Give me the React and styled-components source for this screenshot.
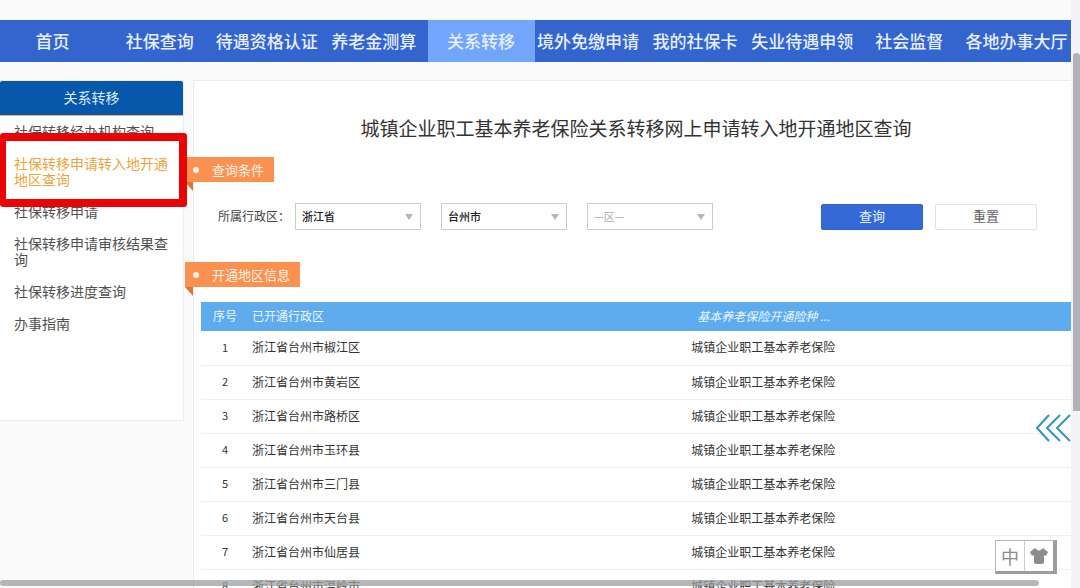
import React from 'react';
import styled, { createGlobalStyle } from 'styled-components';

const navItems = [
  '首页', '社保查询', '待遇资格认证', '养老金测算', '关系转移',
  '境外免缴申请', '我的社保卡', '失业待遇申领', '社会监督', '各地办事大厅',
];

const menuItems = [
  '社保转移经办机构查询',
  '社保转移申请转入地开通地区查询',
  '社保转移申请',
  '社保转移申请审核结果查询',
  '社保转移进度查询',
  '办事指南',
];

const areas = ['椒江区', '黄岩区', '路桥区', '玉环县', '三门县', '天台县', '仙居县', '温岭市'];

const App = () => {
  return (
    <Window>
      <GlobalStyle />
      <Page>
        <Nav>
          {navItems.map((item) => (
            <NavLink href="#" key={item} $active={item === '关系转移'}>{item}</NavLink>
          ))}
        </Nav>
        <Body>
          <Sidebar>
            <SideHead>关系转移</SideHead>
            <Menu>
              {menuItems.map((item, i) => (
                <MenuItem key={item}>
                  <MenuLink href="#" $active={i === 1}>{item}</MenuLink>
                  {i === 1 && <Highlight />}
                </MenuItem>
              ))}
            </Menu>
          </Sidebar>
          <Main>
            <Title>城镇企业职工基本养老保险关系转移网上申请转入地开通地区查询</Title>
            <Ribbon>查询条件</Ribbon>
            <Form onSubmit={(e) => e.preventDefault()}>
              <Label htmlFor="province">所属行政区：</Label>
              <Selects>
                <SelectBox>
                  <Select id="province"><option>浙江省</option></Select>
                </SelectBox>
                <SelectBox>
                  <Select aria-label="市"><option>台州市</option></Select>
                </SelectBox>
                <SelectBox>
                  <Select aria-label="区" $empty><option>—区—</option></Select>
                </SelectBox>
              </Selects>
              <Buttons>
                <Button type="submit" $primary>查询</Button>
                <Button type="reset">重置</Button>
              </Buttons>
            </Form>
            <Ribbon>开通地区信息</Ribbon>
            <Table>
              <thead>
                <tr>
                  <Th $width="48px" $center>序号</Th>
                  <Th>已开通行政区</Th>
                  <Th $width="44%"><Hint>基本养老保险开通险种 ...</Hint></Th>
                </tr>
              </thead>
              <tbody>
                {areas.map((area, i) => (
                  <tr key={area}>
                    <Td $center>{i + 1}</Td>
                    <Td>浙江省台州市{area}</Td>
                    <Td>城镇企业职工基本养老保险</Td>
                  </tr>
                ))}
              </tbody>
            </Table>
          </Main>
        </Body>
      </Page>
      <ScrollTrack><ScrollThumb /></ScrollTrack>
      <BottomBar />
      <Expand aria-label="展开">
        <svg width="36" height="28" viewBox="0 0 36 28" fill="none" stroke="#3295b8" strokeWidth="2">
          <path d="M14 1 2 14l12 13M25 1 12 14l13 13M35 1 22 14l13 13" />
        </svg>
      </Expand>
      <Ime>
        <ImeButton>中</ImeButton>
        <ImeButton aria-label="皮肤">
          <svg width="18" height="16" viewBox="0 0 18 16" fill="#8c8c8c">
            <path d="M5 0 Q9 5 13 0 L18 4 L16 8 L14 7 V14 Q14 16 12 16 H6 Q4 16 4 14 V7 L2 8 L0 4 Z" />
          </svg>
        </ImeButton>
      </Ime>
    </Window>
  )
}

export default App

const GlobalStyle = createGlobalStyle`
    * {
        box-sizing: border-box;
    }
    body {
        margin: 0;
        background: #fafafa;
        color: #444;
        font-family: "Noto Sans CJK SC", "Liberation Sans", sans-serif;
        font-size: 12px;
    }
    a {
        text-decoration: none;
    }
    button, select {
        font-family: inherit;
    }
`;

const Window = styled.div`
    display: flex;
    height: 100vh;
    overflow: hidden;
`;

const Page = styled.div`
    flex: 1;
    min-width: 0;
    padding-top: 20px;
`;

const Nav = styled.nav`
    display: flex;
    height: 42px;
    background: #3465cf;
`;

const NavLink = styled.a`
    flex: 1 1 0;
    display: flex;
    align-items: center;
    justify-content: center;
    padding: 0 2px 2px 0;
    font-size: 17px;
    font-weight: 500;
    white-space: nowrap;
    color: #e6efff;
    background: ${(p) => (p.$active ? '#72a6fc' : 'transparent')};
`;

const Body = styled.div`
    display: flex;
    align-items: flex-start;
    gap: 9px;
    margin-top: 18px;
`;

const Sidebar = styled.aside`
    width: 184px;
    flex-shrink: 0;
    min-height: 341px;
    background: #fff;
    border: 1px solid #ececec;
    border-left: 0;
`;

const SideHead = styled.div`
    height: 35px;
    line-height: 32px;
    text-align: center;
    font-size: 14px;
    color: #dcebfa;
    background: #0757ab;
    border-bottom: 1px solid #f0b070;
    border-radius: 2px 2px 0 0;
`;

const Menu = styled.ul`
    list-style: none;
    margin: 0;
    padding: 7px 14px;
    display: flex;
    flex-direction: column;
    gap: 16px;
`;

const MenuItem = styled.li`
    position: relative;
    line-height: 16px;
    font-size: 14px;
`;

const MenuLink = styled.a`
    display: block;
    color: ${(p) => (p.$active ? '#eba43c' : '#505050')};
`;

/* red frame over the current entry, wider than the sidebar */
const Highlight = styled.div`
    position: absolute;
    inset: -22px -18px -20px -14px;
    border: 8px solid #e90505;
    border-left-width: 6px;
    border-radius: 3px;
    pointer-events: none;
    z-index: 2;
`;

const Main = styled.main`
    flex: 1;
    min-width: 0;
    padding: 35px 0 0 7px;
    background: #fff;
    border: 1px solid #ebebeb;
    border-right: 0;
`;

const Title = styled.h1`
    margin: 0 0 17px;
    text-align: center;
    font-size: 19px;
    font-weight: 400;
    line-height: 24px;
    color: #333;
`;

const Ribbon = styled.h2`
    position: relative;
    width: fit-content;
    height: 25px;
    margin: 0 0 0 -16px;
    padding: 0 10px 0 27px;
    font-size: 13px;
    font-weight: 400;
    line-height: 25px;
    color: #fff0e2;
    background: #fb9150;

    &::before {
        content: '';
        position: absolute;
        left: 8px;
        top: 10px;
        width: 6px;
        height: 6px;
        border-radius: 50%;
        background: #fff3e8;
    }

    &::after {
        content: '';
        position: absolute;
        left: 0;
        top: 100%;
        border-top: 9px solid #d9763c;
        border-left: 8px solid transparent;
    }
`;

const Form = styled.form`
    display: flex;
    align-items: center;
    height: 27px;
    margin: 21px 0 32px;
    padding: 0 34px 0 17px;
`;

const Label = styled.label`
    width: 77px;
    padding-bottom: 2px;
    white-space: nowrap;
`;

const Selects = styled.div`
    display: flex;
    gap: 20px;
`;

const SelectBox = styled.div`
    position: relative;
    width: 126px;

    &::after {
        content: '';
        position: absolute;
        right: 8px;
        top: 11px;
        border-top: 6px solid #b5b5b5;
        border-left: 4px solid transparent;
        border-right: 4px solid transparent;
        pointer-events: none;
    }
`;

const Select = styled.select`
    appearance: none;
    display: block;
    width: 100%;
    height: 27px;
    padding: 0 6px 2px;
    border: 1px solid #ccc;
    border-radius: 0;
    background: #fff;
    font-size: 11px;
    font-weight: ${(p) => (p.$empty ? 400 : 500)};
    color: ${(p) => (p.$empty ? '#aaa' : '#222')};
`;

const Buttons = styled.div`
    display: flex;
    gap: 12px;
    margin-left: auto;
`;

const Button = styled.button`
    width: 102px;
    height: 26px;
    padding: 0 0 2px;
    font-size: 13px;
    border-radius: 2px;
    border: 1px solid ${(p) => (p.$primary ? '#2f62cc' : '#e2e2e2')};
    color: ${(p) => (p.$primary ? '#e8f0ff' : '#666')};
    background: ${(p) => (p.$primary ? '#356ad6' : '#fff')};
`;

const Table = styled.table`
    width: 100%;
    margin-top: 15px;
    table-layout: fixed;
    border-collapse: collapse;
`;

const Th = styled.th`
    width: ${(p) => p.$width || 'auto'};
    height: 29px;
    padding: 0 3px 2px;
    text-align: ${(p) => (p.$center ? 'center' : 'left')};
    font-weight: 400;
    color: #eaf6ff;
    background: #5eabed;
`;

const Hint = styled.em`
    padding-left: 6px;
`;

const Td = styled.td`
    height: 34px;
    padding: 0 3px 2px;
    text-align: ${(p) => (p.$center ? 'center' : 'left')};
    font-size: ${(p) => (p.$center ? '11px' : '12px')};
    color: #333;
    border-bottom: 1px solid #f0f0f0;
`;

const ScrollTrack = styled.div`
    width: 9px;
    flex-shrink: 0;
    padding: 53px 0 0 2px;
    background: #f4f4f6;
`;

const ScrollThumb = styled.div`
    height: 67%;
    border-radius: 4px 4px 0 0;
    background: #b1b1b7;
`;

const BottomBar = styled.div`
    position: fixed;
    left: 0;
    right: 41px;
    bottom: 2px;
    height: 6px;
    border-radius: 3px;
    background: rgba(155, 157, 162, 0.75);
`;

const Expand = styled.button`
    position: fixed;
    right: 9px;
    top: 414px;
    padding: 0;
    border: 0;
    background: none;

    svg {
        display: block;
    }
`;

const Ime = styled.div`
    position: fixed;
    right: 23px;
    bottom: 14px;
    display: flex;
    width: 62px;
    height: 34px;
    background: #fff;
    border: 1px solid #b8b8b8;
    border-right: 4px solid #9c9c9c;
    border-bottom: 3px solid #9c9c9c;
`;

const ImeButton = styled.button`
    flex: 1;
    display: flex;
    align-items: center;
    justify-content: center;
    padding: 0;
    border: 0;
    background: none;
    font-size: 18px;
    color: #8c8c8c;

    & + & {
        border-left: 1px solid #ccc;
    }
`;
